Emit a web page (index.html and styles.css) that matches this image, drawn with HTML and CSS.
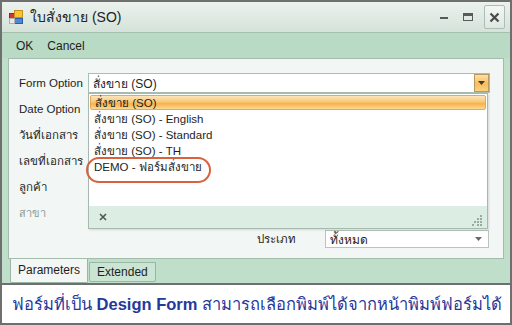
FILE: index.html
```html
<!DOCTYPE html>
<html lang="th">
<head>
    <meta charset="UTF-8">
    <title>ใบสั่งขาย (SO)</title>
    <link rel="stylesheet" href="styles.css">
</head>
<body>
    <div class="shot">
        <div class="window">
            <div class="titlebar">
                <svg class="app-icon" width="14" height="14" viewBox="0 0 14 14">
                    <rect x="0.5" y="3.5" width="5" height="5" fill="#d8352c" stroke="#a02020"/>
                    <rect x="5.5" y="0.5" width="8" height="7" fill="#f7c531" stroke="#c8901a"/>
                    <rect x="5.5" y="8.5" width="8" height="5" fill="#4f86d6" stroke="#2c5ea8"/>
                    <rect x="0.5" y="8.5" width="5" height="5" fill="#e8e8e8" stroke="#b0b0b0"/>
                </svg>
                <div class="title">ใบสั่งขาย (SO)</div>
                <div class="controls">
                    <span class="ctl-min"></span>
                    <span class="ctl-max"></span>
                    <span class="ctl-close">
                        <svg width="11" height="11" viewBox="0 0 11 11">
                            <path d="M1.5 1.5 L9.5 9.5 M9.5 1.5 L1.5 9.5" stroke="#4a4a4a" stroke-width="2.2"/>
                        </svg>
                    </span>
                </div>
            </div>
            <div class="toolbar">
                <span class="tool">OK</span>
                <span class="tool">Cancel</span>
            </div>
            <div class="panel">
                <div class="row">
                    <span class="label">Form Option</span>
                    <div class="combo combo-main">
                        <span>สั่งขาย (SO)</span>
                        <span class="drop-btn">
                            <svg width="7" height="4" viewBox="0 0 7 4"><path d="M0 0 H7 L3.5 4 Z" fill="#33413a"/></svg>
                        </span>
                    </div>
                </div>
                <div class="row"><span class="label">Date Option</span></div>
                <div class="row"><span class="label">วันที่เอกสาร</span></div>
                <div class="row"><span class="label">เลขที่เอกสาร</span></div>
                <div class="row"><span class="label">ลูกค้า</span></div>
                <div class="row"><span class="label label-off">สาขา</span></div>
                <div class="row row-type">
                    <span class="label">ประเภท</span>
                    <div class="combo combo-type">
                        <span>ทั้งหมด</span>
                        <svg width="7" height="4" viewBox="0 0 7 4"><path d="M0 0 H7 L3.5 4 Z" fill="#6a6a6a"/></svg>
                    </div>
                </div>

                <div class="dropdown">
                    <div class="items">
                        <div class="item item-active">สั่งขาย (SO)</div>
                        <div class="item">สั่งขาย (SO) - English</div>
                        <div class="item">สั่งขาย (SO) - Standard</div>
                        <div class="item">สั่งขาย (SO) - TH</div>
                        <div class="item">DEMO - ฟอร์มสั่งขาย</div>
                    </div>
                    <div class="ring"></div>
                    <div class="drop-foot">
                        <svg width="8" height="8" viewBox="0 0 8 8">
                            <path d="M1 1 L7 7 M7 1 L1 7" stroke="#4d5a52" stroke-width="1.6"/>
                        </svg>
                        <svg class="grip" width="11" height="11" viewBox="0 0 11 11">
                            <rect x="8" y="0" width="2" height="2" fill="#9aaaa0"/>
                            <rect x="5" y="3" width="2" height="2" fill="#9aaaa0"/>
                            <rect x="8" y="3" width="2" height="2" fill="#9aaaa0"/>
                            <rect x="2" y="6" width="2" height="2" fill="#9aaaa0"/>
                            <rect x="5" y="6" width="2" height="2" fill="#9aaaa0"/>
                            <rect x="8" y="6" width="2" height="2" fill="#9aaaa0"/>
                            <rect x="0" y="9" width="2" height="2" fill="#9aaaa0"/>
                            <rect x="5" y="9" width="2" height="2" fill="#9aaaa0"/>
                            <rect x="8" y="9" width="2" height="2" fill="#9aaaa0"/>
                        </svg>
                    </div>
                </div>
            </div>
            <div class="tabs">
                <span class="tab tab-active">Parameters</span>
                <span class="tab">Extended</span>
            </div>
        </div>
        <div class="caption">
            <span>ฟอร์มที่เป็น <b>Design Form</b> สามารถเลือกพิมพ์ได้จากหน้าพิมพ์ฟอร์มได้</span>
        </div>
    </div>
</body>
</html>
```

FILE: styles.css
```css
body {
    margin: 0;
    background: #ffffff;
    font-family: "Liberation Sans", Arial, sans-serif;
    font-size: 12px;
    color: #1e1e1e;
}
.shot {
    width: 512px;
    height: 325px;
    box-sizing: border-box;
    border: 2px solid #6f6f6f;
    display: flex;
    flex-direction: column;
}
.window {
    height: 283px;
    box-sizing: border-box;
    border-bottom: 2px solid #6f6f6f;
    background: #bfdfcb;
    display: flex;
    flex-direction: column;
}
.titlebar {
    height: 30px;
    flex: none;
    display: flex;
    align-items: center;
    padding-left: 7px;
    background: linear-gradient(#ecf2ee, #d4e3d9);
    border-bottom: 1px solid #a6c0af;
}
.app-icon {
    margin-right: 7px;
}
.title {
    font-size: 14px;
    color: #222;
}
.controls {
    margin-left: auto;
    margin-right: 5px;
    display: flex;
    align-items: center;
}
.ctl-min {
    width: 8px;
    height: 2px;
    background: #5a5a5a;
    margin-right: 15px;
    margin-top: 2px;
}
.ctl-max {
    width: 8px;
    height: 4px;
    border: 1px solid #5a5a5a;
    border-top-width: 3px;
    margin-right: 11px;
}
.ctl-close {
    width: 21px;
    height: 24px;
    box-sizing: border-box;
    border: 1px solid #aebdb3;
    border-radius: 2px;
    background: linear-gradient(#f3f7f4, #dde8e1);
    display: flex;
    align-items: center;
    justify-content: center;
}
.toolbar {
    height: 25px;
    flex: none;
    display: flex;
    align-items: center;
    padding-left: 14px;
    gap: 14px;
    background: #b9dbc6;
}
.panel {
    position: relative;
    height: 201px;
    flex: none;
    box-sizing: border-box;
    margin: 0 6px 0 6px;
    padding: 11px 0 0 10px;
    background: #f2f6f4;
    border: 1px solid #a3bcab;
}
.row {
    height: 26px;
    display: flex;
    align-items: center;
}
.label {
    width: 69px;
    flex: none;
    font-size: 11.5px;
}
.label-off {
    color: #8e9a93;
    font-size: 11px;
}
.combo {
    box-sizing: border-box;
    background: #fff;
    display: flex;
    align-items: center;
    padding-left: 4px;
}
.combo-main {
    width: 402px;
    height: 20px;
    border: 1px solid #a9bdb0;
}
.drop-btn {
    margin-left: auto;
    width: 15px;
    height: 18px;
    box-sizing: border-box;
    border: 1px solid #b99a5c;
    background: linear-gradient(#fde0a8, #f8bd5c 55%, #fbd27f);
    display: flex;
    align-items: center;
    justify-content: center;
}
.row-type {
    padding-left: 238px;
}
.row-type .label {
    width: 68px;
}
.combo-type {
    width: 164px;
    height: 18px;
    border: 1px solid #b7c6bc;
    padding-right: 6px;
    justify-content: space-between;
}
.dropdown {
    position: absolute;
    left: 79px;
    top: 34px;
    width: 400px;
    height: 136px;
    box-sizing: border-box;
    border: 1px solid #a8b8ae;
    background: #fff;
    display: flex;
    flex-direction: column;
    box-shadow: 1px 1px 2px rgba(0, 0, 0, 0.12);
}
.items {
    flex: 1;
    padding-top: 1px;
    font-size: 11.5px;
}
.item {
    height: 16px;
    line-height: 16px;
    padding-left: 4px;
    margin: 0 1px;
}
.item-active {
    height: 15px;
    line-height: 14px;
    margin-bottom: 1px;
    box-sizing: border-box;
    border: 1px solid #e3aa5a;
    border-radius: 2px;
    background: linear-gradient(#fde4bb, #f9c878 45%, #f7b248 60%, #fcd992);
}
.ring {
    position: absolute;
    left: -3px;
    top: 63px;
    width: 125px;
    height: 26px;
    box-sizing: border-box;
    border: 2px solid #d9613d;
    border-radius: 13px;
}
.drop-foot {
    height: 22px;
    flex: none;
    display: flex;
    align-items: center;
    justify-content: space-between;
    padding: 0 4px 0 10px;
    background: #dcede3;
}
.grip {
    margin-top: 6px;
}
.tabs {
    flex: 1;
    display: flex;
    align-items: flex-start;
    padding-left: 8px;
    gap: 1px;
}
.tab {
    height: 18px;
    line-height: 18px;
    margin-top: 3px;
    padding: 0 7px;
    border: 1px solid #9ab5a3;
    border-radius: 0 0 2px 2px;
    background: #cae5d4;
}
.tab-active {
    margin-top: -1px;
    height: 24px;
    line-height: 24px;
    border-top: none;
    background: #f2f6f4;
}
.caption {
    flex: 1;
    display: flex;
    align-items: center;
    padding-left: 10px;
    font-size: 16.5px;
    color: #26389a;
    white-space: nowrap;
}
```
